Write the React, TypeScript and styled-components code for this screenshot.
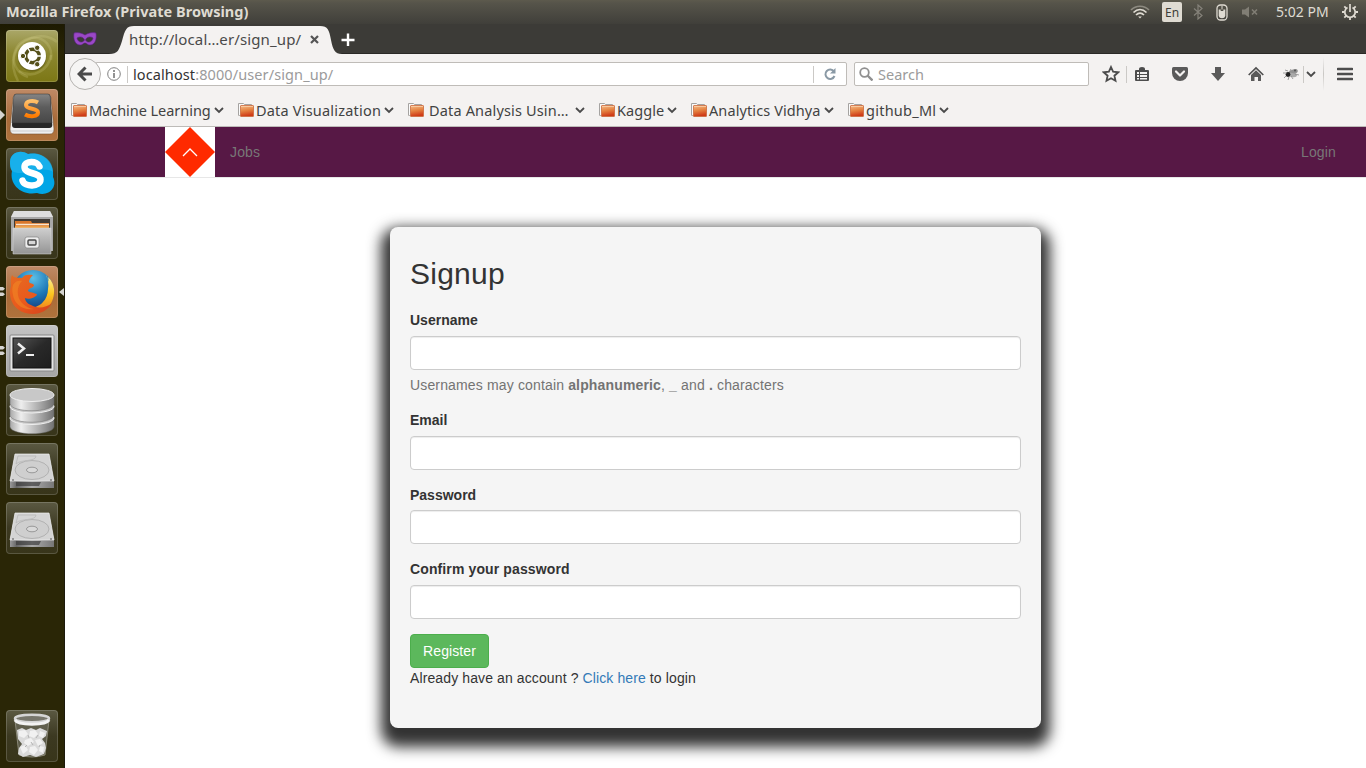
import React from "react";
import styled, { createGlobalStyle } from "styled-components";

const GlobalStyle = createGlobalStyle`
  *, *::before, *::after { box-sizing: border-box; }
  html, body { margin: 0; padding: 0; overflow: hidden; background: #fff; }
  svg { display: block; flex: none; }
`;

const ubuntu = `"Noto Sans", "Open Sans", sans-serif`;
const helvetica = `"Liberation Sans", Arial, sans-serif`;

/* ---------- desktop shell ---------- */

const Desktop = styled.div`
  width: 1366px;
  height: 768px;
  display: flex;
  flex-direction: column;
  overflow: hidden;
`;

const Panel = styled.header`
  height: 24px;
  flex: none;
  display: flex;
  align-items: center;
  padding: 0 8px 0 6px;
  background: linear-gradient(#5d5a4d 0, #56544a 3px, #403f3a 24px);
  color: #dfdbd2;
  font-family: ${ubuntu};
`;

const PanelTitle = styled.span`
  flex: 1;
  height: 24px;
  font-size: 14.5px;
  line-height: 23px;
  font-weight: 700;
  letter-spacing: 0.03px;
  white-space: nowrap;
`;

const Indicators = styled.div`
  display: flex;
  align-items: center;
  height: 24px;
`;

const Indicator = styled.div<{ $w: number }>`
  width: ${(p) => p.$w}px;
  height: 24px;
  display: flex;
  align-items: center;
  justify-content: center;
`;

const Keyboard = styled.span`
  width: 20px;
  height: 20px;
  border-radius: 2px;
  background: #dfdbd2;
  color: #3f3e39;
  font-size: 12px;
  line-height: 21px;
  text-align: center;
`;

const Clock = styled.span`
  width: 55px;
  height: 24px;
  font-size: 14px;
  line-height: 23px;
  letter-spacing: 0;
  white-space: nowrap;
`;

const Body = styled.div`
  flex: 1;
  min-height: 0;
  display: flex;
`;

const Launcher = styled.nav`
  width: 65px;
  flex: none;
  display: flex;
  flex-direction: column;
  gap: 7px;
  padding: 6px 6px 6px;
  background: linear-gradient(#1d1a02 0, #2a2606 30px, #2a2606 100%);
  border-right: 1px solid #1c1a0c;
`;

const Tile = styled.div<{ $bg: string; $last?: boolean }>`
  position: relative;
  width: 52px;
  height: 52px;
  flex: none;
  margin-top: ${(p) => (p.$last ? "auto" : "0")};
  border-radius: 4px;
  background: ${(p) => p.$bg};
  box-shadow: inset 0 0 0 1px rgba(255, 255, 255, 0.17);
`;

const Pip = styled.svg<{ $right?: boolean }>`
  position: absolute;
  top: 21px;
  ${(p) => (p.$right ? "right: -6px;" : "left: -6px;")}
`;

/* ---------- browser ---------- */

const Browser = styled.main`
  flex: 1;
  min-width: 0;
  display: flex;
  flex-direction: column;
  background: #fff;
  font-family: ${ubuntu};
`;

const TabStrip = styled.div`
  height: 30px;
  flex: none;
  display: flex;
  background: #3c3b37;
  border-bottom: 1px solid #2a2926;
`;

const MaskCell = styled.div`
  width: 41px;
  padding: 8px 0 0 8px;
`;

const Tab = styled.div`
  position: relative;
  width: 238px;
  height: 30px;
  display: flex;
  align-items: center;
  padding: 0 0 0 23px;
`;

const TabShape = styled.svg`
  position: absolute;
  left: 0;
  top: 0;
`;

const TabLabel = styled.span`
  position: relative;
  width: 181px;
  font-size: 15px;
  letter-spacing: 0.12px;
  color: #4a4a4a;
  white-space: nowrap;
`;

const TabClose = styled.svg`
  position: relative;
`;

const NewTab = styled.div`
  position: relative;
  height: 30px;
  display: flex;
  align-items: center;
  margin-left: -3px;
`;

const Toolbar = styled.div`
  height: 40px;
  flex: none;
  display: flex;
  align-items: center;
  padding-left: 4px;
  background: #f4f2f1;
`;

const BackButton = styled.div`
  position: relative;
  z-index: 1;
  width: 32px;
  height: 32px;
  flex: none;
  margin-right: -6px;
  display: flex;
  align-items: center;
  justify-content: center;
  border: 1px solid #b5b3b0;
  border-radius: 50%;
  background: #f6f5f4;
`;

const Field = styled.div<{ $w: number; $ml: number; $pl: number }>`
  width: ${(p) => p.$w}px;
  height: 24px;
  flex: none;
  display: flex;
  align-items: center;
  margin-left: ${(p) => p.$ml}px;
  padding-left: ${(p) => p.$pl}px;
  border: 1px solid #bfbcb8;
  border-radius: 2px;
  background: #fff;
  font-size: 14.5px;
  color: #9b9b9b;
  white-space: nowrap;
`;

const Divider = styled.i<{ $h?: number; $ml?: number; $mr?: number; $fade?: boolean }>`
  width: 1px;
  height: ${(p) => p.$h ?? 17}px;
  flex: none;
  margin: 0 ${(p) => p.$mr ?? 0}px 0 ${(p) => p.$ml ?? 0}px;
  background: ${(p) => (p.$fade ? "linear-gradient(transparent, #c9c7c4, transparent)" : "#cbc9c6")};
`;

const Url = styled.span`
  width: 680px;
  letter-spacing: 0.1px;
`;

const Host = styled.span`
  color: #333;
`;

const SearchText = styled.span`
  margin-left: 5px;
`;

const Tool = styled.div<{ $w: number }>`
  width: ${(p) => p.$w}px;
  flex: none;
  display: flex;
  justify-content: center;
`;

const Bookmarks = styled.div`
  height: 33px;
  flex: none;
  display: flex;
  gap: 14px;
  padding: 0 0 1px 6px;
  background: #f4f2f1;
  border-bottom: 1px solid #bdbbb8;
`;

const Bookmark = styled.div`
  display: flex;
  align-items: center;
`;

const BookmarkLabel = styled.span<{ $w: number; $ls: number; $wide?: boolean }>`
  width: ${(p) => p.$w}px;
  margin: ${(p) => (p.$wide ? "0 7px 0 5px" : "0 3px 0 2px")};
  font-size: 14.5px;
  letter-spacing: ${(p) => p.$ls}px;
  color: #424242;
  white-space: nowrap;
`;

/* ---------- web page ---------- */

const Page = styled.div`
  flex: 1;
  min-height: 0;
  overflow: hidden;
  display: flex;
  flex-direction: column;
  align-items: center;
  font-family: ${helvetica};
  font-size: 14px;
  line-height: 20px;
  letter-spacing: 0.11px;
  color: #333;
`;

const Navbar = styled.div`
  width: 100%;
  height: 51px;
  flex: none;
  display: flex;
  align-items: center;
  padding: 0 30px 0 100px;
  background: #571845;
  border-bottom: 1px solid #e7e7e7;
`;

const NavLink = styled.span<{ $end?: boolean }>`
  margin-left: ${(p) => (p.$end ? "auto" : "15px")};
  letter-spacing: 0.16px;
  color: #777;
`;

const Card = styled.form`
  width: 651px;
  height: 501px;
  flex: none;
  margin-top: 49px;
  padding: 30px 20px 0;
  border-radius: 8px;
  background: #f5f5f5;
  box-shadow: 0 10px 14px 9px #333;
`;

const Title = styled.h2`
  margin: 0 0 20.4px;
  font-size: 30px;
  font-weight: 400;
  line-height: 33px;
  letter-spacing: 0.25px;
`;

const Group = styled.div`
  margin-bottom: 15px;
`;

const Label = styled.label<{ $ls?: number }>`
  display: block;
  height: 20.6px;
  margin-bottom: 5px;
  line-height: 20px;
  font-weight: 700;
  letter-spacing: ${(p) => p.$ls ?? 0}px;
`;

const Input = styled.input`
  display: block;
  width: 100%;
  height: 34px;
  border: 1px solid #ccc;
  border-radius: 4px;
  background: #fff;
  box-shadow: inset 0 1px 1px rgba(0, 0, 0, 0.075);
`;

const Help = styled.p`
  margin: 5px 0 10px;
  letter-spacing: 0.15px;
  color: #737373;
`;

const Register = styled.button`
  display: block;
  width: 79px;
  height: 34px;
  padding: 0;
  border: 1px solid #4cae4c;
  border-radius: 4px;
  background: #5cb85c;
  color: #fff;
  font: 14px/20px ${helvetica};
  letter-spacing: 0.1px;
`;

const Link = styled.a`
  color: #337ab7;
`;

/* ---------- launcher artwork ---------- */

const dim = "linear-gradient(#5b5942 0, #3c3921 50%, #38351a 100%)";
const orange = "linear-gradient(#bf8a66 0, #a96b38 60%, #b0733c 100%)";

const UbuntuIcon = () => (
  <svg width="52" height="52" viewBox="0 0 52 52">
    <g fill="none" stroke="#d9d690" strokeOpacity=".22" strokeWidth="2.500">
      <path d="M12 51C3 34 6 12 25 8c14-2 22 9 20 22" />
      <path d="M51 12C37 0 12 8 8 27c-1 9 5 17 14 20" />
      <path d="M45 25c-2 14-17 25-32 16" />
    </g>
    <circle cx="26" cy="27" r="14.500" fill="#56521a" opacity=".5" />
    <circle cx="26" cy="26" r="14" fill="#fff" />
    <circle cx="26.500" cy="26" r="6.800" fill="none" stroke="#55501a" strokeWidth="3.400" />
    <path d="M26.500 26h10M26.500 26l-5-8.660M26.500 26l-5 8.660" stroke="#fff" strokeWidth="1.300" />
    <g fill="#55501a" stroke="#fff" strokeWidth="1">
      <circle cx="17" cy="26" r="2.700" />
      <circle cx="31.200" cy="17.800" r="2.700" />
      <circle cx="31.200" cy="34.200" r="2.700" />
    </g>
  </svg>
);

const SublimeIcon = () => (
  <svg width="52" height="52" viewBox="0 0 52 52">
    <defs>
      <linearGradient id="sb" x2="0" y2="1"><stop stopColor="#858585" /><stop offset=".45" stopColor="#5d5d5d" /><stop offset="1" stopColor="#474747" /></linearGradient>
      <linearGradient id="ss" x2="0" y2="1"><stop stopColor="#ffc06a" /><stop offset="1" stopColor="#ff7b00" /></linearGradient>
    </defs>
    <path d="M7 9q0-3 3-3h32q3 0 3 3l3 31q0 5-4 5H8q-4 0-4-5z" fill="#efefef" stroke="#76502f" strokeWidth=".6" />
    <path d="M4.500 42h43" stroke="#aaa" strokeDasharray="1 1" />
    <path d="M10 5h32q2 0 2.300 3l2 28q0 3-3 3H9q-3 0-3-3l2-28q0-3 2-3z" fill="#272727" />
    <path d="M10 5h32q2 0 2.300 3L46 34H6L7.700 8q.300-3 2.300-3z" fill="url(#sb)" stroke="#333" strokeWidth=".5" />
    <path d="M32 13.500c-5-3-12-1.500-12 2.500 0 5 12 2.500 12 7.500 0 4-8 5-13 2" fill="none" stroke="url(#ss)" strokeWidth="4" />
  </svg>
);

const SkypeIcon = () => (
  <svg width="52" height="52" viewBox="0 0 52 52">
    <path d="M4 14C4 5 14 1 22 6c14-3 27 8 25 23 5 10-4 20-16 16C16 48 3 37 6 23c-2-3-2-6-2-9z" fill="#00a5e6" />
    <path d="M4 14C4 5 14 1 22 6c14-3 25 6 25 18-12-8-30 6-41-1-2-3-2-6-2-9z" fill="#30bbef" opacity=".5" />
    <path d="M33.500 18.500c-2-6-15-6-15 .5 0 8 16 4.500 16 12.500 0 7.500-16 8-18 1" fill="none" stroke="#fff" strokeWidth="6.500" strokeLinecap="round" />
  </svg>
);

const FilesIcon = () => (
  <svg width="52" height="52" viewBox="0 0 52 52">
    <defs>
      <linearGradient id="fg" x2="0" y2="1"><stop stopColor="#cfcfcf" /><stop offset="1" stopColor="#949494" /></linearGradient>
    </defs>
    <path d="M8 4h36l3 6v34H5V10z" fill="#a8a8a8" />
    <path d="M8 4h36l3 6H5z" fill="#dedede" />
    <path d="M8 12h36v10H8z" fill="#403b35" />
    <path d="M9 14h16l1 2h17v6H9z" fill="#d9762a" />
    <path d="M10 17.500h33" stroke="#f7e5cf" strokeWidth="1.500" />
    <path d="M9 19h34v3H9z" fill="#eda047" />
    <path d="M7 21h38v26H7z" fill="url(#fg)" stroke="#ddd" strokeWidth=".5" />
    <rect x="19" y="30" width="14" height="11" rx="2" fill="#eee" stroke="#777" strokeWidth=".6" />
    <rect x="22" y="33" width="8" height="5" rx="1" fill="#d8d8d8" stroke="#484848" strokeWidth="1.400" />
  </svg>
);

const FirefoxIcon = () => (
  <svg width="52" height="52" viewBox="0 0 52 52">
    <defs>
      <radialGradient id="ffb" cx=".5" cy=".2" r=".8"><stop stopColor="#5cc0e8" /><stop offset=".55" stopColor="#1b75b5" /><stop offset="1" stopColor="#153a78" /></radialGradient>
      <linearGradient id="ffo" x1="0" y1="0" x2=".8" y2="1"><stop stopColor="#e66b22" /><stop offset=".6" stopColor="#e9591d" /><stop offset="1" stopColor="#d6461d" /></linearGradient>
      <linearGradient id="ffy" x2="0" y2="1"><stop stopColor="#fff3a0" /><stop offset=".5" stopColor="#fbc51f" /><stop offset="1" stopColor="#ee741e" /></linearGradient>
    </defs>
    <circle cx="27" cy="24.500" r="20.500" fill="url(#ffb)" />
    <path d="M40 9c2 5 3 9 2 14 0 5-2 10-5 13-4 5-11 6-15 6l4 5c14 1 23-10 22-24-1-6-3-9-6-12 1 4 0 5 0 5s0-4-2-7z" fill="url(#ffy)" />
    <path d="M6 9c-2 5-1 8-1 11-4 13 4 28 22 28 8 0 15-4 19-11-6 5-15 6-21 2-3-1-6-4-6-7 4 2 9 0 12-3 0-2-6-2-9-4 0-3 6-3 6-6-1-2-4-1-5-3 0-3 2-5 4-7-6-1-9 0-11 3-4-1-8 1-10-3z" fill="url(#ffo)" />
    <path d="M7 19c2-4 6-5 9-4-3 3-5 8-4 14 1 7 8 13 16 14-12 2-20-6-21-14-1-4-1-7 0-10z" fill="#f28b24" opacity=".55" />
  </svg>
);

const TerminalIcon = () => (
  <svg width="52" height="52" viewBox="0 0 52 52">
    <defs>
      <linearGradient id="tg" x2="1" y2="1"><stop stopColor="#555" /><stop offset=".5" stopColor="#292929" /><stop offset="1" stopColor="#1e1e1e" /></linearGradient>
    </defs>
    <rect x="4" y="10" width="44" height="36" rx="1" fill="#e5e5e5" stroke="#878787" />
    <rect x="7" y="13" width="38" height="30" fill="url(#tg)" stroke="#111" />
    <path d="M12 18.500l6 5-6 5" fill="none" stroke="#eee" strokeWidth="2.500" />
    <path d="M20 30h8" stroke="#eee" strokeWidth="2" />
  </svg>
);

const DatabaseIcon = () => (
  <svg width="52" height="52" viewBox="0 0 52 52">
    <defs>
      <linearGradient id="dg"><stop stopColor="#a8a8a8" /><stop offset=".25" stopColor="#eee" /><stop offset=".65" stopColor="#adadad" /><stop offset="1" stopColor="#717171" /></linearGradient>
    </defs>
    {[25, 13.5, 2].map((y) => (
      <g key={y} transform={`translate(0 ${y})`}>
        <path d="M4 9v9c2 9 42 9 44 0V9z" fill="url(#dg)" stroke="#666" strokeWidth=".5" />
        <ellipse cx="26" cy="9" rx="22" ry="6.500" fill="#c8c8c8" stroke="#f0f0f0" />
      </g>
    ))}
  </svg>
);

const DiskIcon = () => (
  <svg width="52" height="52" viewBox="0 0 52 52">
    <defs>
      <linearGradient id="kg"><stop stopColor="#999" /><stop offset=".15" stopColor="#666" /><stop offset=".5" stopColor="#aaa" /><stop offset="1" stopColor="#777" /></linearGradient>
    </defs>
    <path d="M9 11h34l5 27v7H4v-7z" fill="url(#kg)" />
    <path d="M9 11h34l5 27H4z" fill="#d4d4d4" stroke="#efefef" strokeWidth=".7" />
    <ellipse cx="26" cy="27" rx="17" ry="9.500" fill="#cfcfcf" stroke="#aaa" strokeWidth=".8" />
    <path d="M10 21c5-5 20-2 20-8H12z" fill="none" stroke="#b9b9b9" strokeWidth=".8" />
    <ellipse cx="26" cy="27" rx="5.500" ry="2.800" fill="#d9d9d9" stroke="#999" />
    <path d="M10 39h25l-2 4H10z" fill="#383838" opacity=".65" />
    <path d="M6 37h2m36 0h2" stroke="#555" />
  </svg>
);

const TrashIcon = () => (
  <svg width="52" height="52" viewBox="0 0 52 52">
    <path d="M9 10l4 35q13 4 26 0l4-35z" fill="#77766a" fillOpacity=".55" stroke="#999889" strokeWidth=".8" />
    <path d="M11 20l5-2 4 2 5-2 5 2 4-2 7 3-1 5-4 3 3 4 1 5-2 6-8 3-6-2-7 2-5-3 1-6 3-4-4-5z" fill="#dadada" />
    <g fill="#f1f1f1">
      <path d="M13 21l6-1 3 4-4 4-5-2zM24 21l5-1 3 4-4 4-5-2zM34 21l5 2-2 5-4-2zM19 30l6-2 3 4-6 4-4-3zM29 30l5-1 3 4-5 3zM14 37l5-2 3 5-5 4zM24 37l5-1 3 4-4 5-5-3zM34 36l4 1-1 6-4-2z" />
    </g>
    <path d="M22 25l1 3m9-3l-2 3m-5 4l2 3m-8 2l2-2m12 2l1-2" fill="none" stroke="#b4b4b4" />
    <ellipse cx="26" cy="8.500" rx="17" ry="3.800" fill="#77766c" stroke="#d5d5d5" strokeWidth="2.500" />
    <path d="M9 10c3 5.500 31 5.500 34 0" fill="none" stroke="#f3f3f3" strokeWidth="3" />
  </svg>
);

const LeftPip = ({ double }: { double?: boolean }) => (
  <Pip width="5" height="10" viewBox="0 0 5 10">
    {double ? <path d="M0 0h3l2 1.700L3 3.500H0zM0 5.500h3l2 1.700L3 9H0z" fill="#d5d4d0" /> : <path d="M0 0l5 5-5 5z" fill="#d5d4d0" />}
  </Pip>
);

/* ---------- browser icons ---------- */

const Chevron = () => (
  <svg width="10" height="8" viewBox="0 0 10 8">
    <path d="M1 2l4 4 4-4" fill="none" stroke="#4a4a4a" strokeWidth="1.800" />
  </svg>
);

const Folder = () => (
  <svg width="16" height="16" viewBox="0 0 16 16">
    <defs>
      <linearGradient id="fo" x2=".2" y2="1"><stop stopColor="#f6bd8c" /><stop offset=".5" stopColor="#e58442" /><stop offset="1" stopColor="#cf3a17" /></linearGradient>
    </defs>
    <path d="M.500 13.500V1.500h5l1 1h7V5" fill="#fafafa" stroke="#a5a3a1" />
    <path d="M.500 13.500l2 0" stroke="#b5b3b0" />
    <rect x="2.500" y="3.500" width="13" height="11" rx=".5" fill="url(#fo)" stroke="#cc6a3c" strokeWidth=".8" />
    <path d="M3 4.500h12" stroke="#fad0a8" strokeWidth=".8" />
  </svg>
);

const bookmarks = [
  { text: "Machine Learning", w: 122, ls: -0.04 },
  { text: "Data Visualization", w: 125, ls: 0.2 },
  { text: "Data Analysis Usin…", w: 139, ls: 0.16, wide: true },
  { text: "Kaggle", w: 47, ls: 0.05 },
  { text: "Analytics Vidhya", w: 112, ls: 0.1 },
  { text: "github_Ml", w: 70, ls: 0.25 },
];

export default function App() {
  return (
    <Desktop>
      <GlobalStyle />
      <Panel>
        <PanelTitle>Mozilla Firefox (Private Browsing)</PanelTitle>
        <Indicators>
          <Indicator $w={22}>
            <svg width="20" height="14" viewBox="0 0 20 14" fill="none" strokeWidth="1.700">
              <path d="M1 5c5-5 13-5 18 0" stroke="#8d8a80" />
              <path d="M3.500 7.500c4-4 9-4 13 0M6 10c2.500-2.500 5.500-2.500 8 0" stroke="#dfdbd2" />
              <path d="M8.200 11.500h3.600L10 13.500z" fill="#dfdbd2" />
            </svg>
          </Indicator>
          <Indicator $w={42}><Keyboard>En</Keyboard></Indicator>
          <Indicator $w={10}>
            <svg width="10" height="16" viewBox="0 0 10 16"><path d="M1 4.500l8 7L5 15V1l4 3.500-8 7" fill="none" stroke="#85827a" strokeWidth="1.200" /></svg>
          </Indicator>
          <Indicator $w={37}>
            <svg width="12" height="17" viewBox="0 0 12 17">
              <rect x="1" y="1" width="10" height="15" rx="3.500" fill="none" stroke="#dfdbd2" strokeWidth="1.300" />
              <path d="M2.700 5.500h2V7h2.600V5.500h2v6.500q-.500 2.300-3.300 2.300T2.700 12z" fill="#dfdbd2" />
              <path d="M6 2v3.500" stroke="#dfdbd2" />
            </svg>
          </Indicator>
          <Indicator $w={19}>
            <svg width="18" height="14" viewBox="0 0 18 14">
              <path d="M1 4.500h3L8 1.500v11L4 9.500H1z" fill="#817e75" />
              <path d="M11 4.500l5 5m0-5l-5 5" stroke="#817e75" strokeWidth="1.600" />
            </svg>
          </Indicator>
          <Indicator $w={17} />
          <Clock>5:02 PM</Clock>
          <Indicator $w={11} />
          <svg width="16" height="16" viewBox="0 0 16 16" fill="none" stroke="#dfdbd2">
            <path d="M5.500 3.500a5.200 5.200 0 1 0 5 0" strokeWidth="1.700" />
            <path d="M8 0v8" strokeWidth="1.700" />
            <path d="M0 8h2.500m11 0H16M8 13.500V16M2.300 2.300l2 2m9.400-2l-2 2m-9.400 9.400l2-2m9.400 2l-2-2" strokeWidth="1.800" />
          </svg>
        </Indicators>
      </Panel>

      <Body>
        <Launcher>
          <Tile $bg="linear-gradient(#aaa768 0, #8c8730 45%, #7c7715 100%)"><UbuntuIcon /></Tile>
          <Tile $bg={orange}><SublimeIcon /><LeftPip /></Tile>
          <Tile $bg={dim}><SkypeIcon /></Tile>
          <Tile $bg={dim}><FilesIcon /></Tile>
          <Tile $bg={orange}>
            <FirefoxIcon />
            <LeftPip double />
            <Pip $right width="5" height="10" viewBox="0 0 5 10"><path d="M5 1L0 5l5 4z" fill="#d5d4d0" /></Pip>
          </Tile>
          <Tile $bg="linear-gradient(#c4c4c4, #a5a5a5)"><TerminalIcon /><LeftPip double /></Tile>
          <Tile $bg={dim}><DatabaseIcon /></Tile>
          <Tile $bg={dim}><DiskIcon /></Tile>
          <Tile $bg={dim}><DiskIcon /></Tile>
          <Tile $bg={dim} $last><TrashIcon /></Tile>
        </Launcher>

        <Browser>
          <TabStrip>
            <MaskCell>
              <svg width="24" height="14" viewBox="0 0 24 14">
                <path fillRule="evenodd" d="M1 1c4-1 8 0 11 2 3-2 7-3 11-2 1 6-1 12-6 12-3 0-3-2-5-2s-2 2-5 2C2 13 0 7 1 1zm3 5c1 5 6 5 7.500 2-1-3-4.500-4-7.500-2zm16 0c-3-2-6.500-1-7.500 2 1.500 3 6.500 3 7.500-2z" fill="#9a48c6" stroke="#5b2380" strokeWidth=".6" />
              </svg>
            </MaskCell>
            <Tab>
              <TabShape width="238" height="30" viewBox="0 0 238 30">
                <path d="M3 30c9 0 10-4 13-13C19 6 20 2 28 2h186c8 0 9 4 11 14 2 10 4 14 11 14z" fill="#f4f2f1" />
              </TabShape>
              <TabLabel>http://local…er/sign_up/</TabLabel>
              <TabClose width="9" height="9" viewBox="0 0 9 9"><path d="M1 1l7 7m0-7L1 8" stroke="#555" strokeWidth="2.200" /></TabClose>
            </Tab>
            <NewTab>
              <svg width="14" height="14" viewBox="0 0 14 14"><path d="M.500 8h13M7 1.500v13" stroke="#fff" strokeWidth="2.400" /></svg>
            </NewTab>
          </TabStrip>

          <Toolbar>
            <BackButton>
              <svg width="16" height="16" viewBox="0 0 16 16"><path d="M8.500 1.500L2 8l6.500 6.500M3 8h12" fill="none" stroke="#4a4a4a" strokeWidth="3" /></svg>
            </BackButton>
            <Field $w={752} $ml={0} $pl={11}>
              <svg width="14" height="14" viewBox="0 0 14 14" fill="none" stroke="#808080">
                <circle cx="7" cy="7" r="6.300" />
                <path d="M7 6v5M7 3v2" strokeWidth="1.700" />
              </svg>
              <Divider $ml={6} $mr={5} />
              <Url><Host>localhost</Host>:8000/user/sign_up/</Url>
              <Divider $mr={9} />
              <svg width="14" height="14" viewBox="0 0 14 14">
                <path d="M11 4.500A4.700 4.700 0 1 0 11.500 9" fill="none" stroke="#8a99a5" strokeWidth="2" />
                <path d="M12.500 1v5.500H7z" fill="#8a99a5" />
              </svg>
            </Field>
            <Field $w={235} $ml={7} $pl={4}>
              <svg width="14" height="14" viewBox="0 0 14 14" fill="none" stroke="#909090">
                <circle cx="5.500" cy="5.500" r="4.300" strokeWidth="1.800" />
                <path d="M8.500 8.500l5 5" strokeWidth="2.400" />
              </svg>
              <SearchText>Search</SearchText>
            </Field>
            <Tool $w={44}>
              <svg width="18" height="18" viewBox="0 0 18 18"><path d="M9 2l2.100 4.700 5.200.600-3.900 3.400 1.100 5.100L9 13.200l-4.500 2.600 1.100-5.100L1.700 7.300l5.200-.600z" fill="none" stroke="#4d4d4d" strokeWidth="1.800" /></svg>
            </Tool>
            <Divider $ml={-7} />
            <Tool $w={30}>
              <svg width="16" height="16" viewBox="0 0 16 16">
                <path d="M1 5q0-1 1-1h3V3q0-2 3-2t3 2v1h3q1 0 1 1v9q0 1-1 1H2q-1 0-1-1z" fill="#4d4d4d" />
                <path d="M3 6h2v2H3zm3 0h7v2H6zM3 9h2v2H3zm3 0h7v2H6zm-3 3h2v1.500H3zm3 0h7v1.500H6z" fill="#f4f2f1" />
              </svg>
            </Tool>
            <Tool $w={45}>
              <svg width="16" height="16" viewBox="0 0 16 16">
                <path d="M1.500 1h13q1.500 0 1.500 1.500V7A8 8 0 0 1 0 7V2.500Q0 1 1.500 1z" fill="#5a5a5a" />
                <path d="M4 5.500l4 4 4-4" fill="none" stroke="#f4f2f1" strokeWidth="2.200" strokeLinecap="round" strokeLinejoin="round" />
              </svg>
            </Tool>
            <Tool $w={32}><svg width="16" height="16" viewBox="0 0 16 16"><path d="M5 1h6v6h4l-7 8-7-8h4z" fill="#5a5a5a" /></svg></Tool>
            <Tool $w={44}>
              <svg width="16" height="16" viewBox="0 0 16 16">
                <path d="M.700 9L8 2l7.300 7" fill="none" stroke="#505050" strokeWidth="1.700" />
                <path d="M3 9l5-4.700L13 9v6h-3v-4H6.500v4H3z" fill="#5a5a5a" />
              </svg>
            </Tool>
            <Tool $w={25}>
              <svg width="16" height="14" viewBox="0 0 16 14">
                <ellipse cx="10" cy="5" rx="5" ry="2.500" transform="rotate(-20 10 5)" fill="#929292" />
                <ellipse cx="9" cy="8" rx="5" ry="2" transform="rotate(8 9 8)" fill="#aaa" />
                <circle cx="5" cy="7.500" r="2.400" fill="#222" />
                <circle cx="12" cy="3.500" r="1" fill="#555" />
                <path d="M5 4L2 3m2 3L0 6m3 3l-2 2m5-1l-1 3m3-4l2 3m2-5l4 1M7 4l1-2" stroke="#888" strokeWidth=".8" />
              </svg>
            </Tool>
            <Divider />
            <Tool $w={14}><Chevron /></Tool>
            <Divider $ml={5} $h={34} $fade />
            <Tool $w={42}>
              <svg width="16" height="14" viewBox="0 0 16 14"><path d="M1 2h14M1 7h14M1 12h14" stroke="#4d4d4d" strokeWidth="2.700" strokeLinecap="round" /></svg>
            </Tool>
          </Toolbar>

          <Bookmarks>
            {bookmarks.map((b) => (
              <Bookmark key={b.text}>
                <Folder />
                <BookmarkLabel $w={b.w} $ls={b.ls} $wide={b.wide}>{b.text}</BookmarkLabel>
                <Chevron />
              </Bookmark>
            ))}
          </Bookmarks>

          <Page>
            <Navbar>
              <svg width="50" height="50" viewBox="0 0 50 50">
                <path d="M0 0h50v50H0z" fill="#fff" />
                <path d="M25 0l25 25-25 25L0 25z" fill="#ff2a00" />
                <path d="M18 29l7-7 7 7" fill="none" stroke="#fff" strokeWidth="1.300" />
              </svg>
              <NavLink>Jobs</NavLink>
              <NavLink $end>Login</NavLink>
            </Navbar>
            <Card>
              <Title>Signup</Title>
              <Group>
                <Label>Username</Label>
                <Input />
                <Help>Usernames may contain <b>alphanumeric</b>, <b>_</b> and <b>.</b> characters</Help>
              </Group>
              <Group><Label>Email</Label><Input /></Group>
              <Group><Label>Password</Label><Input /></Group>
              <Group><Label $ls={0.12}>Confirm your password</Label><Input /></Group>
              <Register type="button">Register</Register>
              <div>Already have an account ? <Link>Click here</Link> to login</div>
            </Card>
          </Page>
        </Browser>
      </Body>
    </Desktop>
  );
}
